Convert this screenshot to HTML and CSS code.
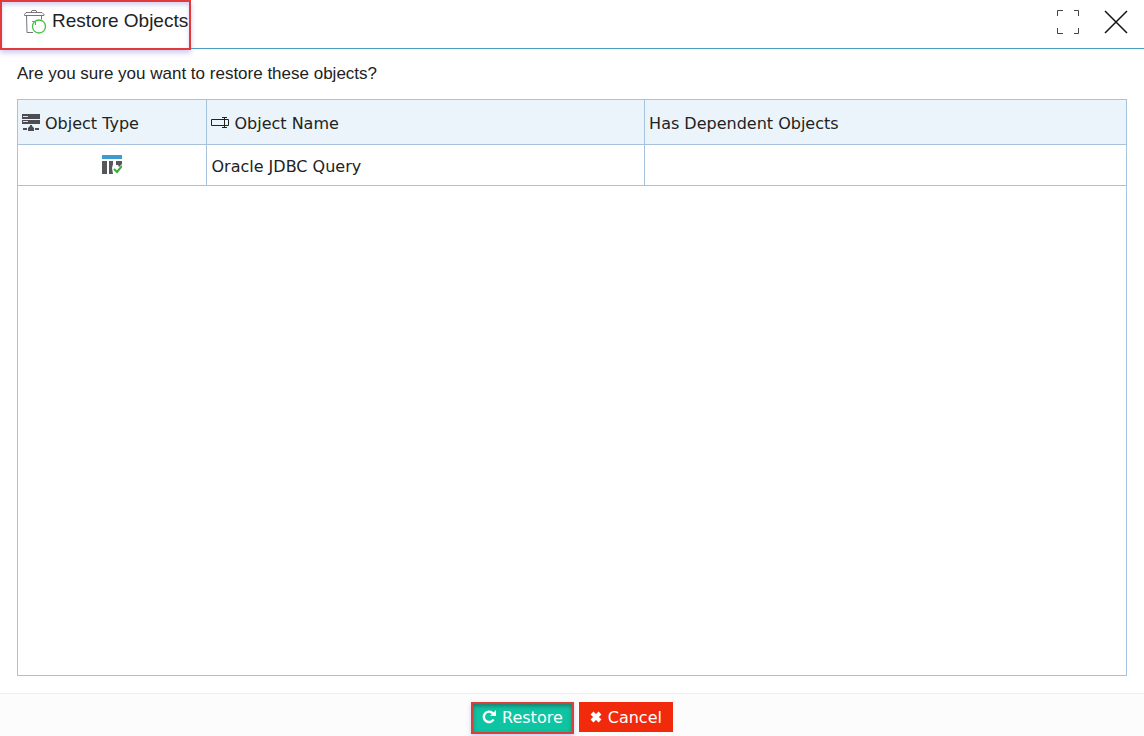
FILE: index.html
```html
<!DOCTYPE html>
<html lang="en">
<head>
    <meta charset="UTF-8">
    <meta name="viewport" content="width=device-width, initial-scale=1.0">
    <title>Restore Objects</title>
    <link rel="stylesheet" href="styles.css">
</head>
<body>

    <div class="dialog">
        <!-- Header -->
        <header class="dialog-header">
            <h1 class="dialog-title">
                <svg width="24" height="26" viewBox="0 0 24 26" fill="none" aria-hidden="true">
                    <path d="M3 3.500h16l2 2v1H1.500v-1zM8 3.500l1-2h4l1 2M3.500 6.500l.5 17h6M18.500 6.500v4" stroke="#77757f"/>
                    <circle cx="16" cy="17.500" r="6.500" stroke="#3fc43f" stroke-width="1.300"/>
                    <path d="M9 12.500h3.500V16" stroke="#3fc43f"/>
                </svg>
                <span>Restore Objects</span>
            </h1>
            <div class="dialog-tools">
                <button class="tool-btn" type="button" aria-label="Maximize">
                    <svg width="24" height="24" viewBox="0 0 24 24" fill="none" stroke="#444">
                        <path d="M1.500 6V.5H7M18 .5h4.500V6M22.500 18v5.500H18M7 23.500H1.500V18"/>
                    </svg>
                </button>
                <button class="tool-btn" type="button" aria-label="Close">
                    <svg width="24" height="24" viewBox="0 0 24 24" fill="none" stroke="#111" stroke-width="1.500">
                        <path d="M1 1l22 22M23 1L1 23"/>
                    </svg>
                </button>
            </div>
        </header>

        <!-- Objects to restore -->
        <main class="dialog-body">
            <p class="question">Are you sure you want to restore these objects?</p>
            <div class="grid">
                <table class="objects">
                    <thead>
                        <tr>
                            <th class="col-type">
                                <div class="cell">
                                    <svg width="18" height="18" viewBox="0 0 18 18" fill="#4c4c52" aria-hidden="true">
                                        <path d="M0 0h18v5H0zM0 6h18v4H0z"/>
                                        <path d="M1 2h5v1H1zM1 7h5v1H1z" fill="#d9e2e8"/>
                                        <path d="M8 11h2v1l2 2v3H6v-3l2-2zM1 14h4v2H1zM13 14h4v2h-4z"/>
                                    </svg>
                                    Object Type
                                </div>
                            </th>
                            <th class="col-name">
                                <div class="cell">
                                    <svg width="18" height="12" viewBox="0 0 18 12" fill="none" stroke="#222" aria-hidden="true">
                                        <path d="M13 2.500H.5v6H13M13 2.500h4.500v6H13M13.500 1v9.500M11 .5h5M11 10.500h5"/>
                                    </svg>
                                    Object Name
                                </div>
                            </th>
                            <th>Has Dependent Objects</th>
                        </tr>
                    </thead>
                    <tbody>
                        <tr>
                            <td class="type">
                                <svg width="20" height="20" viewBox="0 0 20 20" role="img" aria-label="Query">
                                    <path d="M0 0h20v4H0z" fill="#3d9bd2"/>
                                    <path d="M0 6h5v13H0zM7 6h4v3l-1 4 1 6H7zM14 6h6v3l-3 3-1-2h-2z" fill="#55575b"/>
                                    <path d="M12 14l3 3 5-6" fill="none" stroke="#35ad35" stroke-width="2"/>
                                </svg>
                            </td>
                            <td>Oracle JDBC Query</td>
                            <td></td>
                        </tr>
                    </tbody>
                </table>
            </div>
        </main>

        <!-- Actions -->
        <footer class="dialog-footer">
            <button class="btn btn-restore" type="button">
                <svg width="14" height="14" viewBox="0 0 14 14" aria-hidden="true">
                    <path d="M11.500 9.500A5.200 5.200 0 1 1 11 3.500" fill="none" stroke="#fff" stroke-width="2.400"/>
                    <path d="M14 0v6H8z" fill="#fff"/>
                </svg>
                Restore
            </button>
            <button class="btn btn-cancel" type="button">
                <svg width="12" height="12" viewBox="0 0 12 12" aria-hidden="true">
                    <path d="M2 2l8 8M10 2l-8 8" stroke="#fff" stroke-width="4"/>
                </svg>
                Cancel
            </button>
        </footer>
    </div>

</body>
</html>
```
FILE: styles.css
```css
* {
    box-sizing: border-box;
}
body {
    margin: 0;
    font-family: "Liberation Sans", Arial, sans-serif;
    font-size: 16px;
    color: #222;
    background: #fff;
}
svg {
    display: block;
    flex: none;
}
.dialog {
    display: flex;
    flex-direction: column;
    min-height: 100vh;
}
.dialog-header {
    display: flex;
    justify-content: space-between;
    align-items: flex-start;
    height: 49px;
    border-bottom: 1px solid #4a9fc0;
}
.dialog-title {
    display: flex;
    align-items: flex-start;
    gap: 5px;
    height: 50px;
    margin: 0;
    padding: 7px 1px 0 21px;
    font-size: 19px;
    line-height: 24px;
    font-weight: normal;
    background: #fff;
    border: 2px solid #e23a3a;
    box-shadow: 0 3px 5px rgba(120, 100, 220, 0.35), inset 0 3px 4px rgba(120, 100, 220, 0.3);
}
.dialog-tools {
    display: flex;
    gap: 24px;
    padding: 10px 16px 0 0;
}
.tool-btn {
    padding: 0;
    border: none;
    background: none;
    cursor: pointer;
}
.dialog-body {
    flex: 1;
    display: flex;
    flex-direction: column;
    padding: 15px 17px 17px;
}
.question {
    margin: 0 0 15px;
    font-size: 17px;
    line-height: 20px;
}
.grid {
    flex: 1;
    border: 1px solid #a5c3dc;
    font-family: Verdana, "DejaVu Sans", sans-serif;
}
.objects {
    width: 100%;
    border-collapse: separate;
    border-spacing: 0;
    table-layout: fixed;
}
.objects th,
.objects td {
    padding: 2px 4px 0;
    border-bottom: 1px solid #a5c3dc;
    border-right: 1px solid #a5c3dc;
    font-weight: normal;
    text-align: left;
}
.objects th:last-child,
.objects td:last-child {
    border-right: none;
}
.objects th {
    height: 45px;
    background: #eaf4fa;
}
.objects td {
    height: 41px;
}
.objects .col-type {
    width: 17.1%;
}
.objects .col-name {
    width: 39.5%;
}
.cell {
    display: flex;
    align-items: center;
    gap: 5px;
}
.objects .type {
    padding-top: 0;
}
.objects .type svg {
    margin: 0 auto;
}
.dialog-footer {
    display: flex;
    justify-content: center;
    gap: 5px;
    padding: 8px 0 2px;
    background: #fcfcfc;
    border-top: 1px solid #f0f0f0;
}
.btn {
    display: flex;
    align-items: center;
    gap: 6px;
    height: 30px;
    padding: 0 11px;
    font-family: Verdana, "DejaVu Sans", sans-serif;
    font-size: 16px;
    color: #fff;
    border: none;
    cursor: pointer;
}
.btn-restore {
    height: 32px;
    padding: 0 9px 2px;
    background: #0dc5a2;
    border: 2px solid #d8403a;
    box-shadow: 0 2px 4px rgba(120, 100, 220, 0.35), inset 0 2px 4px rgba(40, 70, 70, 0.6);
}
.btn-cancel {
    background: #f22a0c;
}
```
